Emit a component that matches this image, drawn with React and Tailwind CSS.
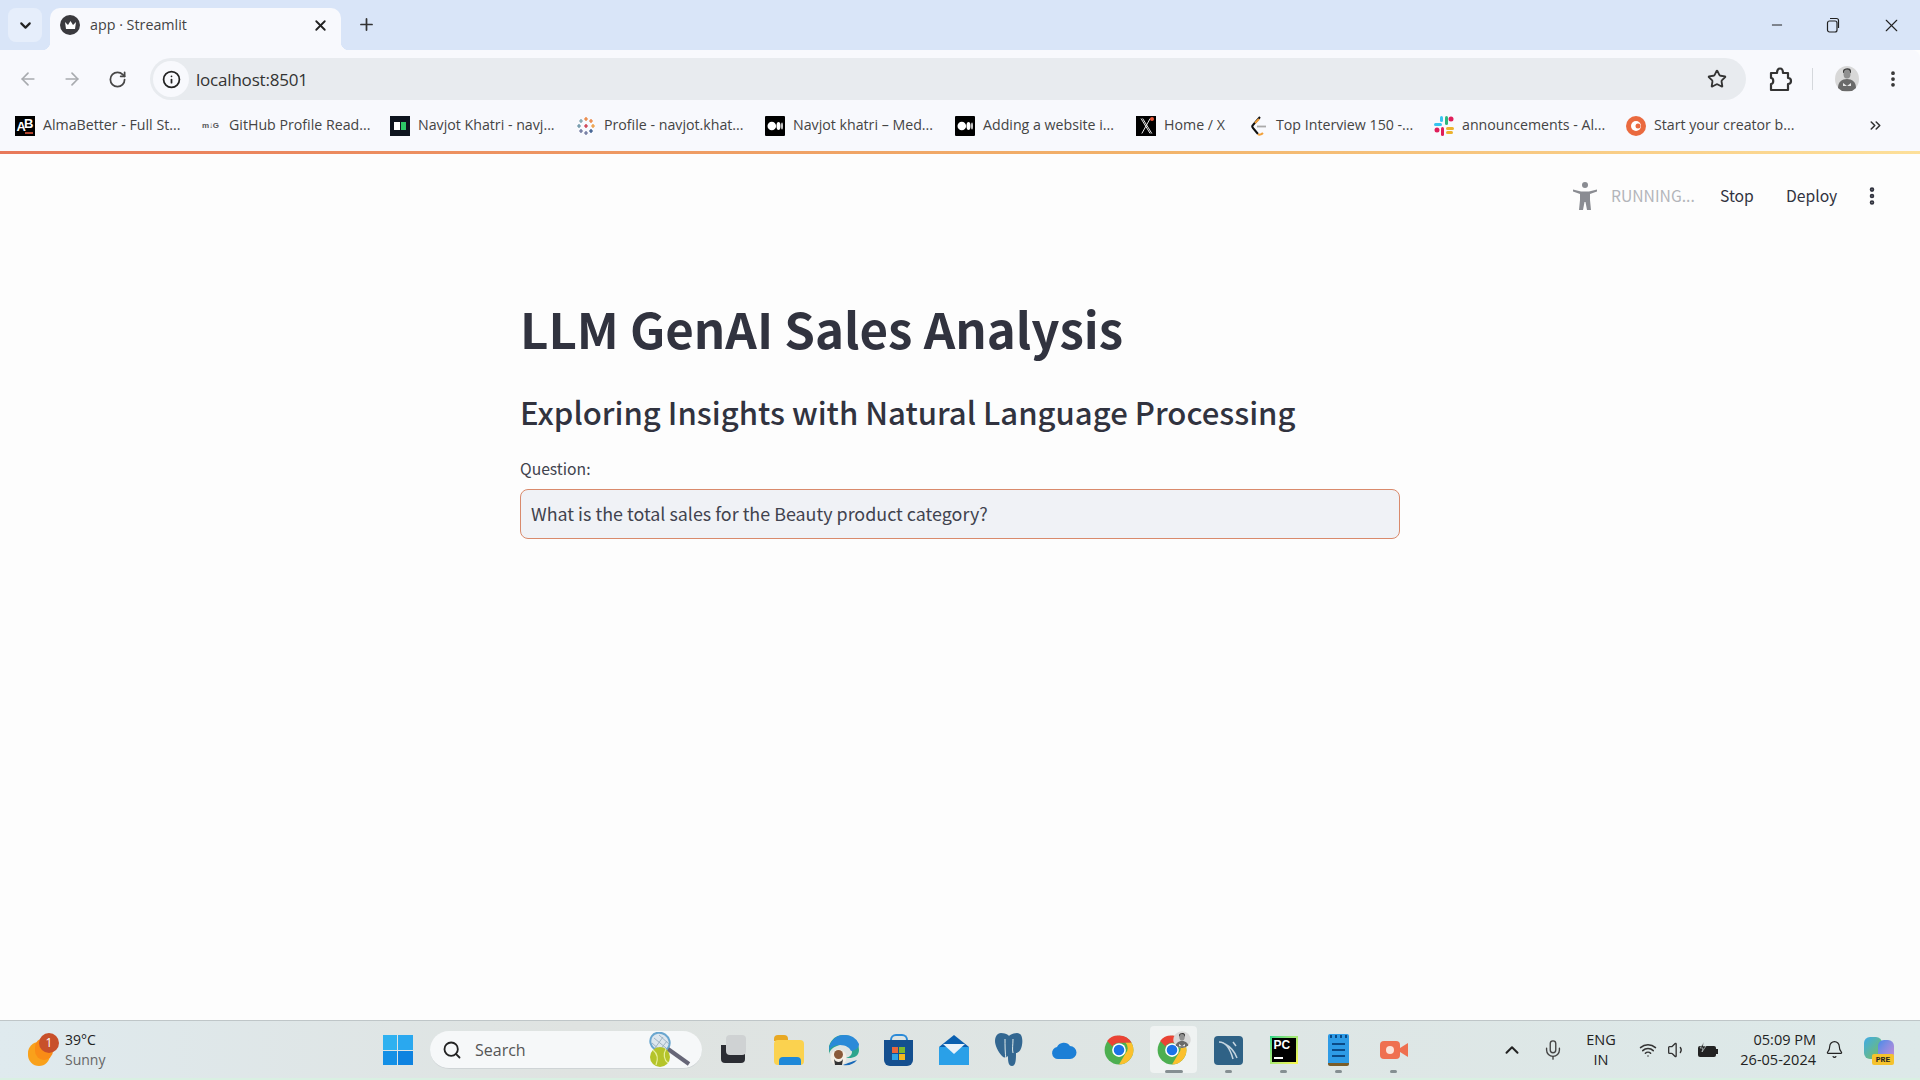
import React from "react";
import {
  ArrowLeft, ArrowRight, RotateCw, Info, Star, EllipsisVertical, ChevronsRight,
  ChevronDown, ChevronUp, X, Plus, Minus, Mic, Wifi, Volume1, Bell, Search,
} from "lucide-react";

const ui = "font-['Open_Sans','Noto_Sans',sans-serif]";
const st = "font-['Noto_Sans_CJK_SC','Noto_Sans',sans-serif]";

const Chrome = ({ s = 30 }) => (
  <svg width={s} height={s} viewBox="0 0 48 48">
    <circle cx="24" cy="24" r="23" fill="#4caf50" />
    <path d="M24 1a23 23 0 0 1 20 11.500H24a12 12 0 0 0-10.400 6L5 9.500A23 23 0 0 1 24 1z" fill="#ea4335" />
    <path d="M44 12.500A23 23 0 0 1 24 47l10.400-17.500a12 12 0 0 0 0-17z" fill="#fbc02d" />
    <circle cx="24" cy="24" r="11" fill="#fff" />
    <circle cx="24" cy="24" r="8.500" fill="#1a73e8" />
  </svg>
);

const MediumIcon = () => (
  <svg width="20" height="20" viewBox="0 0 20 20">
    <rect width="20" height="20" rx="1" fill="#000" />
    <ellipse cx="6.800" cy="10" rx="4.300" ry="4.300" fill="#fff" />
    <ellipse cx="13.500" cy="10" rx="2" ry="4" fill="#fff" />
    <ellipse cx="17" cy="10" rx="0.800" ry="3.500" fill="#fff" />
  </svg>
);

const bookmarks = [
  { w: "w-[186px]", t: "AlmaBetter - Full St...", tw: "w-[139px]", i: (
    <div className="relative w-5 h-5 bg-black text-white font-bold font-['Liberation_Sans',sans-serif] flex items-start justify-center">
      <span className="text-[13px] leading-none mt-[4px]">A</span>
      <span className="text-[13px] leading-none mt-[1px] -ml-[2px]">B</span>
      <span className="absolute right-[2px] bottom-[2px] w-[8px] h-[2px] bg-[#b5452f]" />
    </div>
  ) },
  { w: "w-[189px]", t: "GitHub Profile Read...", tw: "w-[142px]", i: (
    <div className="w-[18px] text-[#555] text-[8px] font-bold font-['Liberation_Sans',sans-serif] tracking-tight">m↓G</div>
  ) },
  { w: "w-[186px]", t: "Navjot Khatri - navj...", tw: "w-[139px]", i: (
    <div className="w-5 h-5 bg-[#0e141e] flex items-center justify-center gap-[1px]">
      <span className="w-[6px] h-[8px] bg-white" /><span className="w-[5px] h-[8px] bg-[#2ec866]" />
    </div>
  ) },
  { w: "w-[189px]", t: "Profile - navjot.khat...", tw: "w-[140px]", i: (
    <svg width="20" height="20" viewBox="0 0 20 20">
      {[[10,3,"#e97627"],[10,17,"#5b6591"],[3,10,"#59879b"],[17,10,"#eb912c"],[10,10,"#c72035"],[5,5,"#7099a6"],[15,5,"#e8762c"],[5,15,"#5b6591"],[15,15,"#1f457e"]].map(([x,y,c],k)=>(
        <g key={k} stroke={c} strokeWidth="1.200"><path d={`M${x-2} ${y}h4M${x} ${y-2}v4`} /></g>
      ))}
    </svg>
  ) },
  { w: "w-[190px]", t: "Navjot khatri – Med...", tw: "w-[142px]", i: <MediumIcon /> },
  { w: "w-[181px]", t: "Adding a website i...", tw: "w-[135px]", i: <MediumIcon /> },
  { w: "w-[112px]", t: "Home / X", tw: "w-[63px]", i: (
    <div className="relative w-5 h-5 bg-black">
      <svg width="20" height="20" viewBox="0 0 20 24">
        <path d="M4 3l11 18M15 3L5 21M6 3l11 18" stroke="#fff" strokeWidth="1.100" fill="none" />
      </svg>
      <span className="absolute top-[1px] right-[2px] w-[4px] h-[4px] rounded-full bg-[#e8583a]" />
    </div>
  ) },
  { w: "w-[186px]", t: "Top Interview 150 -...", tw: "w-[138px]", i: (
    <svg width="18" height="20" viewBox="0 0 18 20" className="ml-[2px]">
      <path d="M10 1L3 9c-1 1-1 2 0 3l5 6" stroke="#111" strokeWidth="2" fill="none" />
      <path d="M8 18c1 1 3 1 5-1" stroke="#f2a13b" strokeWidth="2" fill="none" />
      <path d="M7 10.500h9" stroke="#aaa" strokeWidth="1.800" />
      <path d="M5 7l4-4" stroke="#f2a13b" strokeWidth="2" />
    </svg>
  ) },
  { w: "w-[192px]", t: "announcements - Al...", tw: "w-[143px]", i: (
    <svg width="20" height="20" viewBox="0 0 20 20">
      <rect x="0" y="7" width="8" height="3" rx="1.500" fill="#36c5f0" />
      <rect x="6" y="0" width="3" height="6" rx="1.500" fill="#36c5f0" />
      <rect x="11" y="0" width="3" height="9" rx="1.500" fill="#2eb67d" />
      <circle cx="17" cy="3" r="2.500" fill="#e01e5a" />
      <rect x="12" y="11" width="8" height="3" rx="1.500" fill="#ecb22e" />
      <rect x="12" y="15" width="7" height="3" rx="1.500" fill="#ecb22e" />
      <rect x="7" y="11" width="3" height="9" rx="1.500" fill="#e01e5a" />
      <circle cx="3" cy="14" r="2.500" fill="#e01e5a" />
    </svg>
  ) },
  { w: "w-[180px]", t: "Start your creator b...", tw: "w-[139px]", i: (
    <svg width="20" height="20" viewBox="0 0 20 20">
      <circle cx="10" cy="10" r="10" fill="#ea6a3f" />
      <circle cx="10" cy="10" r="5" fill="#fff" />
      <circle cx="12" cy="10" r="2.500" fill="#ea6a3f" />
    </svg>
  ) },
];

const TaskIcon = ({ children, dot, active }) => (
  <div className="w-[55px] h-full flex flex-col items-center justify-start relative">
    {active && <div className="w-[47px] h-[47px] top-[5px] bg-white/50 rounded absolute" />}
    <div className="relative h-[42px] mt-[8px] flex items-center justify-center">{children}</div>
    {dot && <div className={`-mt-[1px] h-[3px] rounded-full bg-[#858f92] relative ${active ? "w-[18px]" : "w-[7px]"}`} />}
  </div>
);

const Portrait = () => (
  <svg width="24" height="26" viewBox="0 0 24 26">
    <ellipse cx="12" cy="13" rx="12" ry="13" fill="#d8d8d8" />
    <path d="M8 5c0-3 8-4 8 0v2H8z" fill="#3a3a3a" />
    <ellipse cx="12" cy="8" rx="3.500" ry="4.500" fill="#8f8f8f" />
    <path d="M3 22c0-6 4-9 9-9s9 3 9 9l-4 3H7z" fill="#6a6a6a" />
    <path d="M8 17l4 3 4-3v3H8z" fill="#e8e8e8" />
  </svg>
);

export default function App() {
  return (
    <div className={`w-[1920px] h-screen overflow-hidden flex flex-col bg-[#fdfdfd] ${ui}`}>
      {/* tab strip */}
      <div className="h-[50px] shrink-0 bg-[#d9e5f8] flex items-start pl-[8px] pr-[8px]">
        <div className="w-[34px] h-[34px] mt-[8px] rounded-lg bg-[#e6eefb] flex items-center justify-center">
          <ChevronDown size={17} strokeWidth={3} color="#222" />
        </div>
        <div className="relative ml-[8px] w-[291px] h-[42px] mt-[8px] pb-[8px] rounded-t-[10px] bg-[#f8f9fd] flex items-center pl-[10px] pr-[12px]">
          <div className="w-5 h-5 rounded-full bg-[#3a3a3e] flex items-center justify-center">
            <svg width="13" height="11" viewBox="0 0 13 11"><path d="M1 2l3 3 2.500-4L9 5l3-3-1 7H2z" fill="#fff" /></svg>
          </div>
          <span className="ml-[10px] text-[14.300px] text-[#444] leading-none w-[100px] whitespace-nowrap">app · Streamlit</span>
          <X size={17} strokeWidth={2.600} color="#222" className="ml-auto" />
          <span className="absolute -left-[8px] bottom-0 w-[8px] h-[8px] bg-[radial-gradient(circle_at_0_0,transparent_8px,#f8f9fd_8.500px)]" />
          <span className="absolute -right-[8px] bottom-0 w-[8px] h-[8px] bg-[radial-gradient(circle_at_100%_0,transparent_8px,#f8f9fd_8.500px)]" />
        </div>
        <Plus size={19} strokeWidth={2.200} color="#333" className="ml-[16px] mt-[15px]" />
        <div className="ml-auto flex items-center h-[50px] pr-[10px]">
          <Minus size={16} strokeWidth={1.500} color="#222" className="mr-[40px]" />
          <svg width="16" height="16" viewBox="0 0 16 16" fill="none" stroke="#222" strokeWidth="1.200" className="mr-[40px]">
            <rect x="2.500" y="4" width="9.500" height="11" rx="2" /><path d="M5 1.500h6.500a2 2 0 0 1 2 2V11" />
          </svg>
          <X size={21} strokeWidth={1.300} color="#222" />
        </div>
      </div>

      {/* toolbar */}
      <div className="h-[50px] shrink-0 bg-[#f8f9fd] rounded-tr-lg flex items-start pt-[8px] pl-[18px]">
        <div className="flex items-center h-[42px]">
          <ArrowLeft size={20} strokeWidth={2} color="#a8abaf" />
          <ArrowRight size={20} strokeWidth={2} color="#a8abaf" className="ml-[24px]" />
          <RotateCw size={19} strokeWidth={2.200} color="#474747" className="ml-[26px]" />
        </div>
        <div className="ml-[23px] w-[1596px] h-[42px] rounded-full bg-[#e8ebef] flex items-center pl-[3px] pr-[19px]">
          <div className="w-[36px] h-[36px] rounded-full bg-[#f8f9fd] flex items-center justify-center">
            <Info size={19} strokeWidth={2.200} color="#222" />
          </div>
          <span className="ml-[7px] text-[17px] text-[#333] leading-none tracking-[-0.2px]">localhost:8501</span>
          <Star size={20} strokeWidth={2.200} color="#333" className="ml-auto" />
        </div>
        <div className="flex items-center h-[42px]">
          <svg width="24" height="26" viewBox="0 0 24 26" fill="none" stroke="#333" strokeWidth="2.200" strokeLinejoin="round" className="ml-[23px]">
            <path d="M2 7h6c0-6 6-6 6 0h5v5c4 0 4 6 0 6v6H2v-6c3 0 3-6 0-6z" />
          </svg>
          <div className="w-[1px] h-[22px] bg-[#d5d8dc] ml-[19px]" />
          <div className="ml-[22px] flex"><Portrait /></div>
          <EllipsisVertical size={20} strokeWidth={2.500} color="#333" className="ml-[24px]" />
        </div>
      </div>

      {/* bookmarks */}
      <div className="h-[51px] shrink-0 bg-[#f8f9fd] flex items-center pl-[15px]">
        {bookmarks.map((b) => (
          <div key={b.t} className={`${b.w} shrink-0 flex items-center`}>
            <div className="w-[20px] h-[20px] flex items-center justify-center shrink-0">{b.i}</div>
            <span className={`ml-[8px] ${b.tw} text-[14.200px] leading-none text-[#444] whitespace-nowrap`}>{b.t}</span>
          </div>
        ))}
        <ChevronsRight size={17} strokeWidth={2.200} color="#333" className="ml-[61px]" />
      </div>

      {/* load bar */}
      <div className="h-[3px] shrink-0 bg-gradient-to-r from-[#e8795a] via-[#f2b36a] via-60% to-[#fde09a]" />

      {/* streamlit */}
      <div className={`flex-1 min-h-0 flex flex-col ${st}`}>
        <div className="h-[84px] shrink-0 flex items-center justify-end pr-[37px]">
          <svg width="26" height="30" viewBox="0 0 26 30" className="mr-[13px]">
            <circle cx="13" cy="4" r="3" fill="#8a8c92" />
            <path d="M1 8.500l8 2h8l8-2v2l-7 2.500v6l1 10h-4l-1.500-8h-1l-1.500 8H7l1-10v-6L1 10.500z" fill="#8a8c92" />
          </svg>
          <span className="text-[15.700px] text-[#b3b5ba] leading-none w-[83px] whitespace-nowrap">RUNNING...</span>
          <span className="ml-[26px] text-[15.700px] text-[#31333f] leading-none w-[33px]">Stop</span>
          <span className="ml-[33px] text-[15.700px] text-[#31333f] leading-none w-[51px]">Deploy</span>
          <EllipsisVertical size={22} strokeWidth={3} color="#31333f" className="ml-[24px]" />
        </div>
        <div className="w-[880px] mx-auto flex flex-col">
          <h1 className="text-[49.200px] font-bold leading-[72px] text-[#31333f] mt-[54px] pb-[1px] -mb-[1px]">LLM GenAI Sales Analysis</h1>
          <h3 className="text-[31.100px] font-medium leading-[46px] text-[#31333f] mt-[25px]">Exploring Insights with Natural Language Processing</h3>
          <label className="text-[15.700px] leading-[24px] text-[#41434e] mt-[22px]">Question:</label>
          <div className="mt-[8px] h-[50px] rounded-[8px] border border-[#d98a6c] bg-[#f0f2f6] flex items-center pl-[10px] pb-[2px] text-[17.900px] text-[#41434e]">
            What is the total sales for the Beauty product category?
          </div>
        </div>
      </div>

      {/* taskbar */}
      <div className="h-[60px] shrink-0 border-t border-[#bfc6c8] bg-gradient-to-r from-[#dfeaee] via-[#dfe3e1] via-30% to-[#dde9e9] flex flex-col">
        <div className="flex-1 min-h-0 flex items-stretch">
          <div className="w-[370px] shrink-0 flex items-center pl-[28px]">
            <div className="relative w-[30px] h-[34px]">
              <span className="absolute left-0 top-[9px] w-[22px] h-[24px] rounded-full bg-[#f9a11b]" />
              <span className="absolute left-[7px] top-[5px] w-[18px] h-[22px] rounded-full bg-[#fa8c16]" />
              <span className="absolute left-[11px] top-0 w-[20px] h-[20px] rounded-full bg-[#c8502a] text-white text-[12px] leading-[20px] text-center">1</span>
            </div>
            <div className="ml-[7px] flex flex-col text-[14px] leading-[20px] pt-[1px]">
              <span className="text-[#222]">39°C</span>
              <span className="text-[#666]">Sunny</span>
            </div>
          </div>
          <TaskIcon>
            <div className="grid grid-cols-2 gap-[1px] w-[30px] h-[30px]">
              <span className="bg-[#2fb1f0]" /><span className="bg-[#2aa8ef]" /><span className="bg-[#1490e6]" /><span className="bg-[#0f83e0]" />
            </div>
          </TaskIcon>
          <div className="ml-[5px] mt-[10px] w-[272px] h-[38px] rounded-full bg-[#f6f8f9] border-b border-[#cfd4d6] flex items-center pl-[12px] shrink-0">
            <Search size={20} strokeWidth={2.200} color="#222" />
            <span className="ml-[13px] text-[16px] text-[#555]">Search</span>
            <svg width="44" height="36" viewBox="0 0 44 36" className="ml-auto mr-[11px]">
              <ellipse cx="13" cy="10" rx="10" ry="9" fill="#dde6ee" stroke="#6aa6cf" strokeWidth="2" transform="rotate(35 13 10)" />
              <path d="M7 6l12 10M12 3l10 9M5 11l9 8M8 16l8-11M13 18l7-9" stroke="#9fb4c4" strokeWidth="1" />
              <path d="M21 17l21 15" stroke="#667" strokeWidth="4" />
              <circle cx="13" cy="25" r="10" fill="#b5c42a" />
              <path d="M6 18c5 4 5 10 3 15M19 17c-3 5-2 11 2 14" stroke="#e7ef9a" strokeWidth="1.200" fill="none" />
            </svg>
          </div>
          <div className="w-[4px] shrink-0" />
          <TaskIcon>
            <div className="relative w-[25px] h-[30px]">
              <span className="absolute left-0 bottom-[2px] w-[24px] h-[18px] bg-[#2b2d33] rounded-b-sm" />
              <span className="absolute left-[5px] top-0 w-[20px] h-[20px] bg-[#cfd2d3] rounded-sm" />
            </div>
          </TaskIcon>
          <TaskIcon>
            <div className="relative w-[30px] h-[30px]">
              <span className="absolute left-0 top-0 w-[14px] h-[6px] bg-[#e8a823] rounded-t-sm" />
              <span className="absolute left-0 top-[5px] w-[30px] h-[25px] bg-[#fbd24f] rounded-sm" />
              <span className="absolute left-[5px] bottom-0 w-[22px] h-[8px] bg-[#1e88d8] rounded-t-sm" />
            </div>
          </TaskIcon>
          <TaskIcon>
            <svg width="30" height="34" viewBox="0 0 30 34">
              <path d="M15 2a15 15 0 0 1 15 15c0 6-5 8-10 8H14c6 0 9-3 9-6 0-5-6-8-12-7-5 1-10 4-11 9A15 15 0 0 1 15 2z" fill="#2ca58d" />
              <path d="M15 2A15 15 0 0 0 0 17c3-4 7-5 11-5 6 0 10 3 11 6 6-1 8-4 8-7A15 15 0 0 0 15 2z" fill="#2a8ad8" />
              <path d="M14 32c6 1 11-1 14-5-6 2-9 3-14 5z" fill="#1668b8" />
              <circle cx="9.500" cy="24.500" r="8" fill="#f4efe6" />
              <circle cx="9.500" cy="21.500" r="4.500" fill="#8a5a3a" />
              <path d="M5 26c2 4 7 4 9 0l-1 6H6z" fill="#333" />
            </svg>
          </TaskIcon>
          <TaskIcon>
            <div className="relative w-[29px] h-[32px] flex flex-col items-center">
              <span className="w-[18px] h-[6px] border-2 border-b-0 border-[#2a8ad8] rounded-t-md" />
              <div className="w-[29px] h-[26px] bg-[#144f8f] rounded-b-md flex items-center justify-center">
                <div className="grid grid-cols-2 gap-[1px] w-[13px] h-[13px]">
                  <span className="bg-[#e8663c]" /><span className="bg-[#7fb82d]" /><span className="bg-[#2fa3e6]" /><span className="bg-[#f5b81f]" />
                </div>
              </div>
            </div>
          </TaskIcon>
          <TaskIcon>
            <svg width="30" height="30" viewBox="0 0 30 30">
              <path d="M15 0l15 12v18H0V12z" fill="#0a5fb0" />
              <rect x="0" y="12" width="30" height="18" fill="#2aa0e8" />
              <path d="M4 9h22l-11 10z" fill="#e9f2fa" />
            </svg>
          </TaskIcon>
          <TaskIcon>
            <svg width="28" height="34" viewBox="0 0 28 34" fill="#336791">
              <path d="M6 0c6 0 8 3 8 3s3-3 8-3 6 6 5 12-4 8-6 8c0 6 0 13-4 13s-4-6-4-10c-2 2-4 2-6 0C3 19 0 12 0 8s2-8 6-8z" />
              <path d="M10 6c0 6 0 14 1 20M18 6c0 6-1 10 0 14" stroke="#dfeaea" strokeWidth="1" fill="none" />
            </svg>
          </TaskIcon>
          <TaskIcon>
            <svg width="26" height="20" viewBox="0 0 26 20">
              <path d="M7 19a6 6 0 0 1-1-11.900A7.500 7.500 0 0 1 19 6a6.500 6.500 0 0 1 0 13z" fill="#1c7fd6" />
            </svg>
          </TaskIcon>
          <TaskIcon><Chrome s={30} /></TaskIcon>
          <TaskIcon dot active>
            <div className="relative w-[34px] h-[36px] flex items-center">
              <Chrome s={30} />
              <span className="absolute right-0 -top-[4px] w-[18px] h-[20px] rounded-full overflow-hidden flex"><Portrait /></span>
            </div>
          </TaskIcon>
          <TaskIcon dot>
            <div className="w-[29px] h-[29px] rounded-[4px] bg-[#2f6286] flex items-center justify-center">
              <svg width="23" height="23" viewBox="0 0 23 23" fill="none" stroke="#c5d5e0" strokeWidth="1.500">
                <path d="M2 3c6 0 11 6 14 17M8 5c4 2 9 6 12 14M16 3l3 4" />
              </svg>
            </div>
          </TaskIcon>
          <TaskIcon dot>
            <div className="w-[28px] h-[28px] bg-gradient-to-br from-[#21d789] to-[#fcf84a] p-[2px]">
              <div className="w-full h-full bg-black text-white text-[12px] font-bold leading-[15px] pl-[2px] font-['Liberation_Sans',sans-serif] flex flex-col">
                PC
                <span className="w-[9px] h-[2px] bg-white mt-[4px]" />
              </div>
            </div>
          </TaskIcon>
          <TaskIcon dot>
            <div className="relative w-[21px] h-[32px] rounded-[2px] bg-[#2e9be6] border-b-[3px] border-[#7a5d2a] flex flex-col items-center gap-[4px] pt-[9px]">
              <div className="absolute top-[1px] flex gap-[3px]">
                <span className="w-[2px] h-[3px] bg-[#0b4a86]" /><span className="w-[2px] h-[3px] bg-[#0b4a86]" /><span className="w-[2px] h-[3px] bg-[#0b4a86]" /><span className="w-[2px] h-[3px] bg-[#0b4a86]" />
              </div>
              <span className="w-[13px] h-[2px] bg-[#0b4a86]" /><span className="w-[13px] h-[2px] bg-[#0b4a86]" /><span className="w-[13px] h-[2px] bg-[#0b4a86]" />
            </div>
          </TaskIcon>
          <TaskIcon dot>
            <svg width="28" height="20" viewBox="0 0 28 20">
              <rect x="0" y="1" width="20" height="18" rx="4" fill="#ef7050" />
              <path d="M20 8l8-5v14l-8-5z" fill="#ef7050" />
              <circle cx="10" cy="10" r="4" fill="#fbe3da" />
            </svg>
          </TaskIcon>
          <div className="flex-1 flex items-center pl-[80px]">
            <ChevronUp size={22} strokeWidth={2.200} color="#222" />
            <Mic size={22} strokeWidth={1.500} color="#444" className="ml-[19px]" />
            <div className="ml-[17px] w-[40px] flex flex-col items-center text-[14.500px] leading-[20px] text-[#222]">
              <span>ENG</span><span>IN</span>
            </div>
            <Wifi size={18} strokeWidth={2} color="#333" className="ml-[18px]" />
            <Volume1 size={20} strokeWidth={1.600} color="#333" className="ml-[10px]" />
            <svg width="22" height="16" viewBox="0 0 22 16" className="ml-[10px]">
              <rect x="1" y="4" width="18" height="11" rx="2" fill="#222" />
              <rect x="19" y="7" width="2" height="5" fill="#222" />
              <path d="M7 0L3 6h3l-1 4 4-6H6z" fill="#222" stroke="#dfe9e9" strokeWidth="0.600" />
            </svg>
            <div className="ml-[10px] w-[87px] flex flex-col items-end text-[14.500px] leading-[20px] text-[#222] whitespace-nowrap">
              <span>05:09 PM</span><span>26-05-2024</span>
            </div>
            <Bell size={19} strokeWidth={1.500} color="#222" className="ml-[9px]" />
            <div className="relative w-[30px] h-[30px] ml-[20px]">
              <span className="absolute left-0 top-[2px] w-[18px] h-[22px] rounded-md bg-gradient-to-br from-[#3fa9e8] to-[#7dbb3c]" />
              <span className="absolute right-0 top-[5px] w-[16px] h-[20px] rounded-md bg-gradient-to-br from-[#3f8ae8] to-[#c98ad8]" />
              <span className="absolute right-0 bottom-0 w-[22px] h-[11px] bg-[#f5c22d] rounded-[2px] text-[8px] font-bold leading-[11px] text-center text-[#222] font-['Liberation_Mono',monospace]">PRE</span>
            </div>
          </div>
        </div>
        <div className="h-[2px] shrink-0 bg-[#d9f0e2]" />
      </div>
    </div>
  );
}
